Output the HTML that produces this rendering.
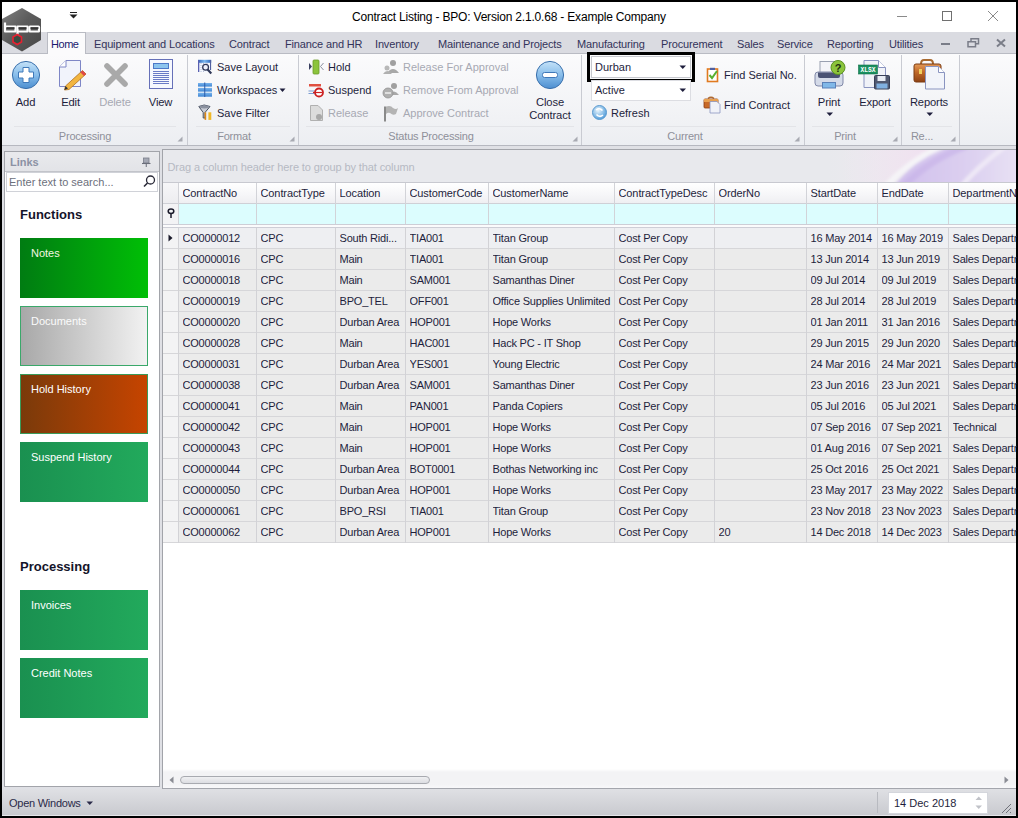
<!DOCTYPE html>
<html><head><meta charset="utf-8">
<style>
*{margin:0;padding:0;box-sizing:border-box}
html,body{width:1018px;height:818px;overflow:hidden;background:#000}
body{position:relative;font-family:"Liberation Sans",sans-serif;font-size:11px;color:#1e1e3c}
.a{position:absolute}
.t{position:absolute;white-space:nowrap;line-height:14px}
svg{position:absolute;overflow:visible}
</style></head><body>

<div class="a" style="left:2px;top:2px;width:1014px;height:814px;background:#fff"></div>
<div class="t" style="left:352px;top:9.6px;font-size:12px;color:#000;font-weight:normal;letter-spacing:-0.19px">Contract Listing - BPO: Version 2.1.0.68 - Example Company</div>
<div class="a" style="left:897px;top:16px;width:10px;height:1px;background:#8a8a8a"></div>
<div class="a" style="left:942px;top:11px;width:10px;height:10px;border:1px solid #707070"></div>
<svg style="left:987px;top:10px" width="12" height="12"><path d="M1 1L11 11M11 1L1 11" stroke="#8a8a8a" stroke-width="1"/></svg>
<div class="a" style="left:70px;top:12px;width:7px;height:1px;background:#222"></div>
<svg style="left:69px;top:14px" width="9" height="6"><path d="M0.5 0.5H8.5L4.5 4.5Z" fill="#222"/></svg>
<div class="a" style="left:2px;top:32px;width:1014px;height:21px;background:#dadbe1"></div>
<div class="a" style="left:2px;top:53px;width:1014px;height:1px;background:#b9bbc3"></div>
<div class="a" style="left:47px;top:32px;width:39px;height:22px;background:#fbfbfc;border:1px solid #b9bbc3;border-bottom:none"></div>
<div class="t" style="left:51px;top:36.5px;font-size:11px;color:#1a1a6e;font-weight:normal;letter-spacing:-0.45px">Home</div>
<div class="t" style="left:94px;top:36.5px;font-size:11px;color:#33335a;font-weight:normal;letter-spacing:-0.15px">Equipment and Locations</div>
<div class="t" style="left:229px;top:36.5px;font-size:11px;color:#33335a;font-weight:normal;letter-spacing:-0.15px">Contract</div>
<div class="t" style="left:285px;top:36.5px;font-size:11px;color:#33335a;font-weight:normal;letter-spacing:-0.15px">Finance and HR</div>
<div class="t" style="left:375px;top:36.5px;font-size:11px;color:#33335a;font-weight:normal;letter-spacing:-0.15px">Inventory</div>
<div class="t" style="left:438px;top:36.5px;font-size:11px;color:#33335a;font-weight:normal;letter-spacing:-0.15px">Maintenance and Projects</div>
<div class="t" style="left:577px;top:36.5px;font-size:11px;color:#33335a;font-weight:normal;letter-spacing:-0.15px">Manufacturing</div>
<div class="t" style="left:661px;top:36.5px;font-size:11px;color:#33335a;font-weight:normal;letter-spacing:-0.15px">Procurement</div>
<div class="t" style="left:737px;top:36.5px;font-size:11px;color:#33335a;font-weight:normal;letter-spacing:-0.15px">Sales</div>
<div class="t" style="left:777px;top:36.5px;font-size:11px;color:#33335a;font-weight:normal;letter-spacing:-0.15px">Service</div>
<div class="t" style="left:827px;top:36.5px;font-size:11px;color:#33335a;font-weight:normal;letter-spacing:-0.15px">Reporting</div>
<div class="t" style="left:889px;top:36.5px;font-size:11px;color:#33335a;font-weight:normal;letter-spacing:-0.15px">Utilities</div>
<div class="a" style="left:941px;top:43px;width:9px;height:2px;background:#7a7d88"></div>
<svg style="left:967px;top:38px" width="13" height="10"><rect x="4" y="0.75" width="7.5" height="5" fill="none" stroke="#7a7d88" stroke-width="1.5"/><rect x="1" y="3.75" width="7.5" height="5" fill="#dadbe1" stroke="#7a7d88" stroke-width="1.5"/></svg>
<svg style="left:996px;top:39px" width="10" height="8"><path d="M1 0.5L9 7.5M9 0.5L1 7.5" stroke="#7a7d88" stroke-width="2"/></svg>
<div class="a" style="left:2px;top:54px;width:1014px;height:91px;background:linear-gradient(#fbfbfc,#f1f2f5 70%,#eceef2)"></div>
<div class="a" style="left:2px;top:145px;width:1014px;height:1px;background:#b6b8c0"></div>
<div class="a" style="left:2px;top:146px;width:1014px;height:4px;background:#dfe0e5"></div>
<div class="a" style="left:187px;top:55px;width:1px;height:90px;background:#c9cbd2"></div>
<div class="a" style="left:298px;top:55px;width:1px;height:90px;background:#c9cbd2"></div>
<div class="a" style="left:581px;top:55px;width:1px;height:90px;background:#c9cbd2"></div>
<div class="a" style="left:804px;top:55px;width:1px;height:90px;background:#c9cbd2"></div>
<div class="a" style="left:901px;top:55px;width:1px;height:90px;background:#c9cbd2"></div>
<div class="a" style="left:959px;top:55px;width:1px;height:90px;background:#c9cbd2"></div>
<div class="a" style="left:14px;top:126px;width:162px;height:1px;background:#e3e4e8"></div>
<div class="a" style="left:196px;top:126px;width:94px;height:1px;background:#e3e4e8"></div>
<div class="a" style="left:306px;top:126px;width:268px;height:1px;background:#e3e4e8"></div>
<div class="a" style="left:590px;top:126px;width:206px;height:1px;background:#e3e4e8"></div>
<div class="a" style="left:812px;top:126px;width:82px;height:1px;background:#e3e4e8"></div>
<div class="a" style="left:910px;top:126px;width:42px;height:1px;background:#e3e4e8"></div>
<div class="t" style="left:25px;width:120px;text-align:center;top:129px;font-size:11px;color:#8e909a;letter-spacing:-0.2px">Processing</div>
<div class="t" style="left:174px;width:120px;text-align:center;top:129px;font-size:11px;color:#8e909a;letter-spacing:-0.2px">Format</div>
<div class="t" style="left:371px;width:120px;text-align:center;top:129px;font-size:11px;color:#8e909a;letter-spacing:-0.2px">Status Processing</div>
<div class="t" style="left:625px;width:120px;text-align:center;top:129px;font-size:11px;color:#8e909a;letter-spacing:-0.2px">Current</div>
<div class="t" style="left:785px;width:120px;text-align:center;top:129px;font-size:11px;color:#8e909a;letter-spacing:-0.2px">Print</div>
<div class="t" style="left:862px;width:120px;text-align:center;top:129px;font-size:11px;color:#8e909a;letter-spacing:-0.2px">Re...</div>
<svg style="left:177px;top:136px" width="6" height="6"><path d="M5.5 0.5V5.5H0.5Z" fill="#a8aab2"/></svg>
<svg style="left:289px;top:136px" width="6" height="6"><path d="M5.5 0.5V5.5H0.5Z" fill="#a8aab2"/></svg>
<svg style="left:572px;top:136px" width="6" height="6"><path d="M5.5 0.5V5.5H0.5Z" fill="#a8aab2"/></svg>
<svg style="left:794px;top:136px" width="6" height="6"><path d="M5.5 0.5V5.5H0.5Z" fill="#a8aab2"/></svg>
<svg style="left:892px;top:136px" width="6" height="6"><path d="M5.5 0.5V5.5H0.5Z" fill="#a8aab2"/></svg>
<svg style="left:950px;top:136px" width="6" height="6"><path d="M5.5 0.5V5.5H0.5Z" fill="#a8aab2"/></svg>
<svg style="left:10px;top:59px" width="32" height="32" viewBox="0 0 32 32">
<defs><linearGradient id="gAdd" x1="0" y1="0" x2="0" y2="1"><stop offset="0" stop-color="#c4e2f8"/><stop offset="0.5" stop-color="#88bdea"/><stop offset="1" stop-color="#4c8ed0"/></linearGradient></defs>
<circle cx="16" cy="16" r="13.6" fill="url(#gAdd)" stroke="#3a70ac" stroke-width="1"/>
<path d="M13 8.5h6v4.5h4.5v6H19v4.5h-6V19H8.5v-6H13Z" fill="#fff" stroke="#3f78b8" stroke-width="1"/>
</svg>
<svg style="left:58px;top:59px" width="30" height="32" viewBox="0 0 30 32">
<path d="M8 1.5H22.5V27.5H1.5V8Z" fill="#f1f3fb" stroke="#7e86c6" stroke-width="1"/>
<path d="M8 1.5V8H1.5" fill="#fff" stroke="#7e86c6" stroke-width="1"/>
<path d="M24.5 11.5L28 15L11 30.5L6.5 31L7.5 27Z" fill="#f2b540" stroke="#b07020" stroke-width="0.8"/>
<path d="M24.5 11.5L28 15L26 17L22.5 13.5Z" fill="#e04848"/>
<path d="M6.5 31L7.5 27L10 29.5Z" fill="#333"/>
</svg>
<svg style="left:102px;top:61px" width="28" height="28" viewBox="0 0 28 28">
<path d="M5 5L23 23M23 5L5 23" stroke="#a9a9a9" stroke-width="5.6" stroke-linecap="round"/>
</svg>
<svg style="left:148px;top:58px" width="26" height="32" viewBox="0 0 26 32">
<rect x="1.5" y="1.5" width="23" height="29" fill="#f6f8fe" stroke="#6670b8" stroke-width="1"/>
<rect x="5.5" y="5.5" width="15" height="5" fill="#8cc4ee" stroke="#4c78c8" stroke-width="1"/>
<path d="M5 13.5h16M5 15.5h16M5 17.5h16M5 19.5h16M5 21.5h16M5 23.5h16M5 25.5h16" stroke="#5a6cc0" stroke-width="0.9"/>
</svg>
<div class="t" style="left:-4.5px;width:60px;text-align:center;top:95px;font-size:11.2px;color:#1e1e3c;letter-spacing:-0.15px">Add</div>
<div class="t" style="left:40.5px;width:60px;text-align:center;top:95px;font-size:11.2px;color:#1e1e3c;letter-spacing:-0.15px">Edit</div>
<div class="t" style="left:85px;width:60px;text-align:center;top:95px;font-size:11.2px;color:#a7a9b3;letter-spacing:-0.15px">Delete</div>
<div class="t" style="left:130.5px;width:60px;text-align:center;top:95px;font-size:11.2px;color:#1e1e3c;letter-spacing:-0.15px">View</div>
<svg style="left:197px;top:59px" width="17" height="17" viewBox="0 0 17 17">
<defs><linearGradient id="gSL" x1="0" y1="0" x2="1" y2="0"><stop offset="0" stop-color="#2c64b8"/><stop offset="0.5" stop-color="#7ab8f0"/><stop offset="1" stop-color="#2c64b8"/></linearGradient></defs>
<rect x="1" y="1" width="13" height="12" fill="#f4f8ff"/>
<rect x="1" y="0.8" width="13.2" height="3" fill="url(#gSL)"/>
<rect x="1" y="1" width="1.3" height="12" fill="#5a60b0"/>
<rect x="13" y="1" width="1.1" height="10" fill="#5060a0"/>
<path d="M4 4v9M6.5 4v9M10 4v3" stroke="#a8b0cc" stroke-width="0.8" stroke-dasharray="1 1"/>
<circle cx="8.6" cy="8.3" r="2.9" fill="#eef2fc" stroke="#303858" stroke-width="1.3"/>
<path d="M10.6 10.6L14.3 14.5" stroke="#303858" stroke-width="2.2"/>
</svg>
<svg style="left:197px;top:82px" width="17" height="16" viewBox="0 0 17 16">
<defs><linearGradient id="gWS" x1="0" y1="0" x2="0" y2="1"><stop offset="0" stop-color="#7ab4ec"/><stop offset="1" stop-color="#3f86d4"/></linearGradient></defs>
<rect x="1" y="1" width="14" height="3.6" fill="url(#gWS)"/><rect x="1" y="5.9" width="14" height="3.7" fill="url(#gWS)"/><rect x="1" y="10.7" width="14" height="4" fill="url(#gWS)"/>
<path d="M7.75 0.5v14.5" stroke="#2a5aa8" stroke-width="1"/>
</svg>
<svg style="left:197px;top:104px" width="17" height="18" viewBox="0 0 17 18">
<path d="M1.8 2.5Q7 -0.5 13 2.5L8 8.5V14H6.2V8.5Z" fill="#c8ccd6" stroke="#4a5262" stroke-width="1"/>
<ellipse cx="7.4" cy="2.8" rx="5" ry="1.6" fill="#8a909e"/>
<rect x="7.6" y="8.3" width="1.6" height="7.6" fill="#e08a18"/>
<rect x="11.4" y="8.3" width="2.9" height="7.6" fill="#f0b828"/>
</svg>
<div class="t" style="left:217px;top:59.7px;font-size:11px;color:#1e1e3c;font-weight:normal;">Save Layout</div>
<div class="t" style="left:217px;top:83.0px;font-size:11px;color:#1e1e3c;font-weight:normal;">Workspaces</div>
<svg style="left:279px;top:88px" width="8" height="5"><path d="M0.5 0.5H6.5L3.5 4Z" fill="#1e1e3c"/></svg>
<div class="t" style="left:217px;top:105.7px;font-size:11px;color:#1e1e3c;font-weight:normal;">Save Filter</div>
<svg style="left:308px;top:59px" width="17" height="16" viewBox="0 0 17 16">
<path d="M1 4L4 7.5L1 11Z" fill="#3a4060"/>
<rect x="5" y="1" width="6" height="14" rx="1" fill="#8cc43c" stroke="#6a9a28" stroke-width="0.8"/>
<path d="M15.5 4L12.5 7.5L15.5 11" fill="none" stroke="#8a90a0" stroke-width="1"/>
</svg>
<svg style="left:308px;top:82px" width="17" height="16" viewBox="0 0 17 16">
<rect x="1" y="2" width="12" height="2.5" fill="#e05040"/>
<path d="M0.5 9h6M0.5 11.5h6" stroke="#7a9ad0" stroke-width="1.2"/>
<circle cx="11" cy="10.5" r="4" fill="#fff" stroke="#cc2020" stroke-width="1.8"/>
<path d="M5 10.5h9" stroke="#cc2020" stroke-width="1.2"/>
</svg>
<svg style="left:309px;top:105px" width="16" height="16" viewBox="0 0 16 16">
<path d="M1.5 0.5H9L13.5 5V15.5H1.5Z" fill="#dcdcdc" stroke="#b0b0b0" stroke-width="1"/>
<circle cx="10" cy="12" r="3" fill="#a8a8a8"/>
</svg>
<div class="t" style="left:328px;top:59.7px;font-size:11px;color:#1e1e3c;font-weight:normal;">Hold</div>
<div class="t" style="left:328px;top:83.0px;font-size:11px;color:#1e1e3c;font-weight:normal;">Suspend</div>
<div class="t" style="left:328px;top:105.7px;font-size:11px;color:#a7a9b3;font-weight:normal;">Release</div>
<svg style="left:383px;top:59px" width="17" height="17" viewBox="0 0 17 17">
<circle cx="10" cy="4" r="3" fill="#a0a0a0"/><path d="M4 14Q10 6 16 14Z" fill="#a8a8a8"/>
<circle cx="4" cy="9" r="2.5" fill="#b8b8b8"/><path d="M0 15Q4 9 9 15Z" fill="#b0b0b0"/>
</svg>
<svg style="left:382px;top:82px" width="18" height="18" viewBox="0 0 18 18">
<circle cx="12" cy="4" r="3" fill="#a0a0a0"/><path d="M7 13Q12 6 17 13Z" fill="#a8a8a8"/>
<circle cx="6" cy="11" r="5" fill="#b0b0b0" stroke="#909090" stroke-width="0.8"/><path d="M3 11h6" stroke="#fff" stroke-width="1.2"/>
</svg>
<svg style="left:383px;top:105px" width="17" height="17" viewBox="0 0 17 17">
<path d="M2 1.5V16.5" stroke="#8a8a8a" stroke-width="2"/>
<path d="M3 1.5Q8 0 10 3Q13 5 15 3L13 9Q10 11 7 8Q5 7 3 9Z" fill="#b4b4b4"/>
</svg>
<div class="t" style="left:403px;top:59.7px;font-size:11px;color:#a7a9b3;font-weight:normal;">Release For Approval</div>
<div class="t" style="left:403px;top:83.0px;font-size:11px;color:#a7a9b3;font-weight:normal;">Remove From Approval</div>
<div class="t" style="left:403px;top:105.7px;font-size:11px;color:#a7a9b3;font-weight:normal;">Approve Contract</div>
<svg style="left:534px;top:59px" width="32" height="32" viewBox="0 0 32 32">
<defs><linearGradient id="gCl" x1="0" y1="0" x2="0" y2="1"><stop offset="0" stop-color="#c4e2f8"/><stop offset="0.5" stop-color="#88bdea"/><stop offset="1" stop-color="#4c8ed0"/></linearGradient></defs>
<circle cx="16" cy="16" r="13.6" fill="url(#gCl)" stroke="#3a70ac" stroke-width="1"/>
<rect x="8.5" y="13.5" width="15" height="5" rx="2" fill="#fff" stroke="#3f78b8" stroke-width="1"/>
</svg>
<div class="t" style="left:510px;width:80px;text-align:center;top:96px;font-size:11.2px;letter-spacing:-0.1px;color:#1e1e3c;line-height:12.5px">Close<br>Contract</div>
<div class="a" style="left:587px;top:52px;width:108px;height:30px;border:3px solid #000"></div>
<div class="a" style="left:591px;top:56px;width:100px;height:22px;background:#fff;border:1px solid #c6c8ce"></div>
<div class="t" style="left:595px;top:59.8px;font-size:11px;color:#1e1e3c;font-weight:normal;">Durban</div>
<svg style="left:679px;top:65px" width="8" height="5"><path d="M0.5 0.5H7L3.75 4Z" fill="#1e1e3c"/></svg>
<div class="a" style="left:591px;top:80px;width:100px;height:21px;background:#fff;border:1px solid #dcdde2"></div>
<div class="t" style="left:595px;top:83.0px;font-size:11px;color:#1e1e3c;font-weight:normal;">Active</div>
<svg style="left:679px;top:88px" width="8" height="5"><path d="M0.5 0.5H7L3.75 4Z" fill="#1e1e3c"/></svg>
<svg style="left:591px;top:104px" width="17" height="17" viewBox="0 0 17 17">
<defs><radialGradient id="gRf" cx="0.4" cy="0.35" r="0.7"><stop offset="0" stop-color="#e8f4fc"/><stop offset="1" stop-color="#4a98d8"/></radialGradient></defs>
<circle cx="8.5" cy="8.5" r="7" fill="url(#gRf)" stroke="#5a9ad0" stroke-width="1"/>
<path d="M5 6Q8.5 3 11.5 6.5M12 11Q8.5 14 5.5 10.5" fill="none" stroke="#fff" stroke-width="1.5"/>
</svg>
<div class="t" style="left:611px;top:105.7px;font-size:11px;color:#1e1e3c;font-weight:normal;">Refresh</div>
<svg style="left:706px;top:67px" width="14" height="16" viewBox="0 0 14 16">
<rect x="1.5" y="2" width="10" height="12.5" fill="#fff" stroke="#e07a20" stroke-width="1.6"/>
<rect x="4" y="0.8" width="5" height="2.2" fill="#5060a0"/>
<path d="M3.5 8L6 11L11 4" fill="none" stroke="#58b030" stroke-width="2"/>
</svg>
<div class="t" style="left:724px;top:68.0px;font-size:11px;color:#1e1e3c;font-weight:normal;">Find Serial No.</div>
<svg style="left:703px;top:96px" width="19" height="18" viewBox="0 0 19 18">
<path d="M5 2.5Q8 0 11 2.5" fill="none" stroke="#b06a30" stroke-width="1.5"/>
<rect x="1" y="3" width="14" height="9" rx="1" fill="#c86a28" stroke="#8a3a10" stroke-width="0.8"/>
<rect x="1" y="3" width="14" height="3" fill="#e8a050"/>
<path d="M7 5.5H14L17 8.5V17H7Z" fill="#f0f2f8" stroke="#8a94c0" stroke-width="0.8"/>
</svg>
<div class="t" style="left:724px;top:98.0px;font-size:11px;color:#1e1e3c;font-weight:normal;">Find Contract</div>
<svg style="left:813px;top:58px" width="34" height="32" viewBox="0 0 34 32">
<rect x="7" y="3.5" width="14" height="11" fill="#f4f4f8" stroke="#9aa0b0" stroke-width="1"/>
<rect x="2" y="14" width="28" height="14" rx="3" fill="#d4dae8" stroke="#8088a8" stroke-width="1"/>
<path d="M5 14.5H27V18Q27 20 25 20H7Q5 20 5 18Z" fill="#4a5274"/>
<rect x="9.5" y="24.5" width="13" height="5.5" fill="#80b8e8" stroke="#5a80b8" stroke-width="1"/>
<circle cx="25" cy="9.5" r="7" fill="#8cc43c" stroke="#5a9020" stroke-width="1"/>
<text x="25" y="13.5" font-family="Liberation Sans" font-weight="bold" font-size="11" text-anchor="middle" fill="#203010">?</text>
</svg>
<svg style="left:857px;top:59px" width="34" height="32" viewBox="0 0 34 32">
<path d="M7 1.5H21.5L28.5 8.5V28.5H7Z" fill="#f0f2f8" stroke="#8a94c0" stroke-width="1"/>
<path d="M21.5 1.5V8.5H28.5" fill="#fff" stroke="#8a94c0" stroke-width="1"/>
<rect x="1.5" y="6" width="19" height="9" fill="#1a9060" stroke="#107048" stroke-width="0.6"/>
<text x="11" y="13.2" font-family="Liberation Mono" font-weight="bold" font-size="7" text-anchor="middle" fill="#fff" textLength="15" lengthAdjust="spacingAndGlyphs">XLSX</text>
<rect x="17.5" y="16.5" width="15" height="13.5" rx="1" fill="#505870" stroke="#384058" stroke-width="1"/>
<rect x="20.5" y="17" width="8" height="5" fill="#e8ecf4"/>
<rect x="19.5" y="24.5" width="11" height="5" fill="#80b0e0"/>
</svg>
<svg style="left:912px;top:58px" width="34" height="32" viewBox="0 0 34 32">
<path d="M9 6Q9 2 12 2H18Q21 2 21 6" fill="none" stroke="#a86a30" stroke-width="2"/>
<defs><linearGradient id="gBc" x1="0" y1="0" x2="0" y2="1"><stop offset="0" stop-color="#e49a58"/><stop offset="0.45" stop-color="#c06828"/><stop offset="1" stop-color="#8e4214"/></linearGradient></defs>
<rect x="2" y="6" width="27" height="18" rx="2" fill="url(#gBc)" stroke="#7a3a12" stroke-width="1"/>
<rect x="7" y="11" width="3" height="5" fill="#f0d060"/>
<path d="M13.5 8.5H26.5L32.5 14.5V31H13.5Z" fill="#f2f4fa" stroke="#8a94c0" stroke-width="1"/>
<path d="M26.5 8.5V14.5H32.5" fill="#fff" stroke="#8a94c0" stroke-width="1"/>
</svg>
<div class="t" style="left:799px;width:60px;text-align:center;top:95px;font-size:11.2px;color:#1e1e3c;letter-spacing:-0.15px">Print</div>
<div class="t" style="left:845px;width:60px;text-align:center;top:95px;font-size:11.2px;color:#1e1e3c;letter-spacing:-0.15px">Export</div>
<div class="t" style="left:899px;width:60px;text-align:center;top:95px;font-size:11.2px;color:#1e1e3c;letter-spacing:-0.15px">Reports</div>
<svg style="left:826px;top:111.5px" width="8" height="5"><path d="M0.5 0.5H7L3.75 4Z" fill="#1e1e3c"/></svg>
<svg style="left:926px;top:111.5px" width="8" height="5"><path d="M0.5 0.5H7L3.75 4Z" fill="#1e1e3c"/></svg>
<div class="a" style="left:2px;top:146px;width:1014px;height:643px;background:#dfe0e5"></div>
<div class="a" style="left:4px;top:151px;width:156px;height:636px;background:#fff;border:1px solid #a2a4aa"></div>
<div class="a" style="left:5px;top:152px;width:154px;height:20px;background:linear-gradient(#e9eaed,#e2e3e7)"></div>
<div class="a" style="left:5px;top:171px;width:154px;height:1px;background:#c2c4ca"></div>
<div class="t" style="left:10px;top:155.0px;font-size:11px;color:#8c92a4;font-weight:bold;">Links</div>
<svg style="left:141px;top:155px" width="11" height="13" viewBox="0 0 11 13">
<rect x="2.5" y="3" width="5.5" height="5" fill="#a4a8b4" stroke="#7a7e8a" stroke-width="0.8"/><path d="M1 8.5h8.5" stroke="#6a6e7a" stroke-width="1.1"/><path d="M5.25 9v3" stroke="#6a6e7a" stroke-width="1"/>
</svg>
<div class="a" style="left:6px;top:172px;width:152px;height:20px;background:#fff;border:1px solid #d0d2d8"></div>
<div class="t" style="left:9px;top:175.0px;font-size:11px;color:#6c707c;font-weight:normal;">Enter text to search...</div>
<svg style="left:142px;top:174px" width="15" height="15" viewBox="0 0 15 15">
<circle cx="8.5" cy="6" r="4" fill="none" stroke="#2a2a38" stroke-width="1.3"/><path d="M5.5 9L2 12.5" stroke="#2a2a38" stroke-width="1.6"/>
</svg>
<div class="t" style="left:20px;top:207.5px;font-size:13px;color:#14142a;font-weight:bold;">Functions</div>
<div class="t" style="left:20px;top:559.5px;font-size:13px;color:#14142a;font-weight:bold;">Processing</div>
<div class="a" style="left:20px;top:238px;width:128px;height:60px;background:linear-gradient(90deg,#007c12,#00bf06);border:none"></div>
<div class="t" style="left:31px;top:246.0px;font-size:11px;color:#f4f6e0;font-weight:normal;">Notes</div>
<div class="a" style="left:20px;top:306px;width:128px;height:60px;background:linear-gradient(90deg,#a8a8a8,#f2f2f2);border:1px solid #3aa86a"></div>
<div class="t" style="left:31px;top:314.0px;font-size:11px;color:#fbfbfb;font-weight:normal;">Documents</div>
<div class="a" style="left:20px;top:374px;width:128px;height:60px;background:linear-gradient(90deg,#7a3a0a,#c64400);border:1px solid #3a9a5a"></div>
<div class="t" style="left:31px;top:382.0px;font-size:11px;color:#fff;font-weight:normal;">Hold History</div>
<div class="a" style="left:20px;top:442px;width:128px;height:60px;background:linear-gradient(90deg,#1a9050,#22aa5c);border:none"></div>
<div class="t" style="left:31px;top:450.0px;font-size:11px;color:#fff;font-weight:normal;">Suspend History</div>
<div class="a" style="left:20px;top:590px;width:128px;height:60px;background:linear-gradient(90deg,#1a9050,#22aa5c);border:none"></div>
<div class="t" style="left:31px;top:598.0px;font-size:11px;color:#fff;font-weight:normal;">Invoices</div>
<div class="a" style="left:20px;top:658px;width:128px;height:60px;background:linear-gradient(90deg,#1a9050,#22aa5c);border:none"></div>
<div class="t" style="left:31px;top:666.0px;font-size:11px;color:#fff;font-weight:normal;">Credit Notes</div>
<div class="a" style="left:162px;top:149px;width:854px;height:640px;background:#fff;border-left:1px solid #a2a4aa;border-top:1px solid #a2a4aa"></div>
<div class="a" style="left:163px;top:150px;width:853px;height:32px;background:linear-gradient(90deg,#e8e9ed,#e8e9ed 78%,#eee9f0 88%,#e8e0f2)"></div>
<svg style="left:840px;top:150px;overflow:hidden" width="176" height="32" viewBox="840 150 176 32">
<defs>
<linearGradient id="gSw" x1="0" y1="0" x2="1" y2="0"><stop offset="0" stop-color="#d0bfec"/><stop offset="0.6" stop-color="#dcd0f0"/><stop offset="1" stop-color="#e8e2f4"/></linearGradient>
<linearGradient id="gPk" x1="0" y1="0" x2="1" y2="0"><stop offset="0" stop-color="#efe6f0" stop-opacity="0"/><stop offset="1" stop-color="#f0e0f0"/></linearGradient>
</defs>
<path d="M840 150H930L890 182H840Z" fill="url(#gPk)"/>
<filter id="fBl"><feGaussianBlur stdDeviation="1.4"/></filter>
<g filter="url(#fBl)">
<path d="M894 186Q915 160 944 146H1020V186Z" fill="url(#gSw)"/>
<path d="M884 188Q910 160 942 146" stroke="#f6f4f8" stroke-width="6" fill="none" opacity="0.95"/>
<path d="M902 188Q928 160 966 146" stroke="#c6b0e8" stroke-width="7" fill="none" opacity="0.6"/>
<path d="M960 188Q978 166 1006 146" stroke="#efeaf6" stroke-width="5" fill="none" opacity="0.9"/>
</g>
</svg>
<div class="t" style="left:167.5px;top:160.0px;font-size:11px;color:#b6b9c3;font-weight:normal;letter-spacing:-0.1px">Drag a column header here to group by that column</div>
<div class="a" style="left:163px;top:182px;width:853px;height:1px;background:#c8c9d0"></div>
<div class="a" style="left:163px;top:183px;width:853px;height:20px;background:linear-gradient(#ffffff,#f6f6f8 60%,#efeff2)"></div>
<div class="a" style="left:163px;top:183px;width:15px;height:20px;background:linear-gradient(#f6f6f8,#ededf0)"></div>
<div class="a" style="left:163px;top:203px;width:853px;height:1px;background:#cfd0d6"></div>
<div class="a" style="left:163px;top:204px;width:853px;height:20px;background:#dcfdfe"></div>
<div class="a" style="left:163px;top:204px;width:15px;height:20px;background:#f3f3f5"></div>
<svg style="left:167px;top:208px" width="8" height="11" viewBox="0 0 8 11"><ellipse cx="4" cy="3.2" rx="2.8" ry="2.2" fill="none" stroke="#1a1a2a" stroke-width="1.5"/><path d="M4 5V10" stroke="#1a1a2a" stroke-width="1.5"/></svg>
<div class="a" style="left:163px;top:224px;width:853px;height:1px;background:#cdced6"></div>
<div class="a" style="left:163px;top:225px;width:853px;height:2px;background:#fbfbfc"></div>
<div class="a" style="left:163px;top:227px;width:853px;height:1px;background:#cdced6"></div>
<div class="t" style="left:182.5px;top:186px;width:74px;overflow:hidden;font-size:11px;color:#1e1e3c;letter-spacing:-0.1px">ContractNo</div>
<div class="t" style="left:260.5px;top:186px;width:75px;overflow:hidden;font-size:11px;color:#1e1e3c;letter-spacing:-0.1px">ContractType</div>
<div class="t" style="left:339.5px;top:186px;width:66px;overflow:hidden;font-size:11px;color:#1e1e3c;letter-spacing:-0.1px">Location</div>
<div class="t" style="left:409.5px;top:186px;width:79px;overflow:hidden;font-size:11px;color:#1e1e3c;letter-spacing:-0.1px">CustomerCode</div>
<div class="t" style="left:492.5px;top:186px;width:122px;overflow:hidden;font-size:11px;color:#1e1e3c;letter-spacing:-0.1px">CustomerName</div>
<div class="t" style="left:618.5px;top:186px;width:96px;overflow:hidden;font-size:11px;color:#1e1e3c;letter-spacing:-0.1px">ContractTypeDesc</div>
<div class="t" style="left:718.5px;top:186px;width:88px;overflow:hidden;font-size:11px;color:#1e1e3c;letter-spacing:-0.1px">OrderNo</div>
<div class="t" style="left:810.5px;top:186px;width:67px;overflow:hidden;font-size:11px;color:#1e1e3c;letter-spacing:-0.1px">StartDate</div>
<div class="t" style="left:881.5px;top:186px;width:67px;overflow:hidden;font-size:11px;color:#1e1e3c;letter-spacing:-0.1px">EndDate</div>
<div class="t" style="left:952.5px;top:186px;width:64px;overflow:hidden;font-size:11px;color:#1e1e3c;letter-spacing:-0.1px">DepartmentName</div>
<div class="a" style="left:163px;top:228px;width:853px;height:20px;background:#eeeff2"></div>
<div class="a" style="left:163px;top:248px;width:853px;height:1px;background:#d6d6d9"></div>
<div class="a" style="left:163px;top:228px;width:15px;height:20px;background:#f3f3f4"></div>
<div class="t" style="left:182.5px;top:231px;width:74px;overflow:hidden;font-size:11px;color:#1e1e3c;letter-spacing:-0.2px">CO0000012</div>
<div class="t" style="left:260.5px;top:231px;width:75px;overflow:hidden;font-size:11px;color:#1e1e3c;letter-spacing:-0.2px">CPC</div>
<div class="t" style="left:339.5px;top:231px;width:66px;overflow:hidden;font-size:11px;color:#1e1e3c;letter-spacing:-0.2px">South Ridi...</div>
<div class="t" style="left:409.5px;top:231px;width:79px;overflow:hidden;font-size:11px;color:#1e1e3c;letter-spacing:-0.2px">TIA001</div>
<div class="t" style="left:492.5px;top:231px;width:122px;overflow:hidden;font-size:11px;color:#1e1e3c;letter-spacing:-0.2px">Titan Group</div>
<div class="t" style="left:618.5px;top:231px;width:96px;overflow:hidden;font-size:11px;color:#1e1e3c;letter-spacing:-0.2px">Cost Per Copy</div>
<div class="t" style="left:810.5px;top:231px;width:67px;overflow:hidden;font-size:11px;color:#1e1e3c;letter-spacing:-0.2px">16 May 2014</div>
<div class="t" style="left:881.5px;top:231px;width:67px;overflow:hidden;font-size:11px;color:#1e1e3c;letter-spacing:-0.2px">16 May 2019</div>
<div class="t" style="left:952.5px;top:231px;width:64px;overflow:hidden;font-size:11px;color:#1e1e3c;letter-spacing:-0.2px">Sales Department</div>
<div class="a" style="left:163px;top:249px;width:853px;height:20px;background:#ebebeb"></div>
<div class="a" style="left:163px;top:269px;width:853px;height:1px;background:#d6d6d9"></div>
<div class="a" style="left:163px;top:249px;width:15px;height:20px;background:#f3f3f4"></div>
<div class="t" style="left:182.5px;top:252px;width:74px;overflow:hidden;font-size:11px;color:#1e1e3c;letter-spacing:-0.2px">CO0000016</div>
<div class="t" style="left:260.5px;top:252px;width:75px;overflow:hidden;font-size:11px;color:#1e1e3c;letter-spacing:-0.2px">CPC</div>
<div class="t" style="left:339.5px;top:252px;width:66px;overflow:hidden;font-size:11px;color:#1e1e3c;letter-spacing:-0.2px">Main</div>
<div class="t" style="left:409.5px;top:252px;width:79px;overflow:hidden;font-size:11px;color:#1e1e3c;letter-spacing:-0.2px">TIA001</div>
<div class="t" style="left:492.5px;top:252px;width:122px;overflow:hidden;font-size:11px;color:#1e1e3c;letter-spacing:-0.2px">Titan Group</div>
<div class="t" style="left:618.5px;top:252px;width:96px;overflow:hidden;font-size:11px;color:#1e1e3c;letter-spacing:-0.2px">Cost Per Copy</div>
<div class="t" style="left:810.5px;top:252px;width:67px;overflow:hidden;font-size:11px;color:#1e1e3c;letter-spacing:-0.2px">13 Jun 2014</div>
<div class="t" style="left:881.5px;top:252px;width:67px;overflow:hidden;font-size:11px;color:#1e1e3c;letter-spacing:-0.2px">13 Jun 2019</div>
<div class="t" style="left:952.5px;top:252px;width:64px;overflow:hidden;font-size:11px;color:#1e1e3c;letter-spacing:-0.2px">Sales Department</div>
<div class="a" style="left:163px;top:270px;width:853px;height:20px;background:#ebebeb"></div>
<div class="a" style="left:163px;top:290px;width:853px;height:1px;background:#d6d6d9"></div>
<div class="a" style="left:163px;top:270px;width:15px;height:20px;background:#f3f3f4"></div>
<div class="t" style="left:182.5px;top:273px;width:74px;overflow:hidden;font-size:11px;color:#1e1e3c;letter-spacing:-0.2px">CO0000018</div>
<div class="t" style="left:260.5px;top:273px;width:75px;overflow:hidden;font-size:11px;color:#1e1e3c;letter-spacing:-0.2px">CPC</div>
<div class="t" style="left:339.5px;top:273px;width:66px;overflow:hidden;font-size:11px;color:#1e1e3c;letter-spacing:-0.2px">Main</div>
<div class="t" style="left:409.5px;top:273px;width:79px;overflow:hidden;font-size:11px;color:#1e1e3c;letter-spacing:-0.2px">SAM001</div>
<div class="t" style="left:492.5px;top:273px;width:122px;overflow:hidden;font-size:11px;color:#1e1e3c;letter-spacing:-0.2px">Samanthas Diner</div>
<div class="t" style="left:618.5px;top:273px;width:96px;overflow:hidden;font-size:11px;color:#1e1e3c;letter-spacing:-0.2px">Cost Per Copy</div>
<div class="t" style="left:810.5px;top:273px;width:67px;overflow:hidden;font-size:11px;color:#1e1e3c;letter-spacing:-0.2px">09 Jul 2014</div>
<div class="t" style="left:881.5px;top:273px;width:67px;overflow:hidden;font-size:11px;color:#1e1e3c;letter-spacing:-0.2px">09 Jul 2019</div>
<div class="t" style="left:952.5px;top:273px;width:64px;overflow:hidden;font-size:11px;color:#1e1e3c;letter-spacing:-0.2px">Sales Department</div>
<div class="a" style="left:163px;top:291px;width:853px;height:20px;background:#ebebeb"></div>
<div class="a" style="left:163px;top:311px;width:853px;height:1px;background:#d6d6d9"></div>
<div class="a" style="left:163px;top:291px;width:15px;height:20px;background:#f3f3f4"></div>
<div class="t" style="left:182.5px;top:294px;width:74px;overflow:hidden;font-size:11px;color:#1e1e3c;letter-spacing:-0.2px">CO0000019</div>
<div class="t" style="left:260.5px;top:294px;width:75px;overflow:hidden;font-size:11px;color:#1e1e3c;letter-spacing:-0.2px">CPC</div>
<div class="t" style="left:339.5px;top:294px;width:66px;overflow:hidden;font-size:11px;color:#1e1e3c;letter-spacing:-0.2px">BPO_TEL</div>
<div class="t" style="left:409.5px;top:294px;width:79px;overflow:hidden;font-size:11px;color:#1e1e3c;letter-spacing:-0.2px">OFF001</div>
<div class="t" style="left:492.5px;top:294px;width:122px;overflow:hidden;font-size:11px;color:#1e1e3c;letter-spacing:-0.2px">Office Supplies Unlimited</div>
<div class="t" style="left:618.5px;top:294px;width:96px;overflow:hidden;font-size:11px;color:#1e1e3c;letter-spacing:-0.2px">Cost Per Copy</div>
<div class="t" style="left:810.5px;top:294px;width:67px;overflow:hidden;font-size:11px;color:#1e1e3c;letter-spacing:-0.2px">28 Jul 2014</div>
<div class="t" style="left:881.5px;top:294px;width:67px;overflow:hidden;font-size:11px;color:#1e1e3c;letter-spacing:-0.2px">28 Jul 2019</div>
<div class="t" style="left:952.5px;top:294px;width:64px;overflow:hidden;font-size:11px;color:#1e1e3c;letter-spacing:-0.2px">Sales Department</div>
<div class="a" style="left:163px;top:312px;width:853px;height:20px;background:#ebebeb"></div>
<div class="a" style="left:163px;top:332px;width:853px;height:1px;background:#d6d6d9"></div>
<div class="a" style="left:163px;top:312px;width:15px;height:20px;background:#f3f3f4"></div>
<div class="t" style="left:182.5px;top:315px;width:74px;overflow:hidden;font-size:11px;color:#1e1e3c;letter-spacing:-0.2px">CO0000020</div>
<div class="t" style="left:260.5px;top:315px;width:75px;overflow:hidden;font-size:11px;color:#1e1e3c;letter-spacing:-0.2px">CPC</div>
<div class="t" style="left:339.5px;top:315px;width:66px;overflow:hidden;font-size:11px;color:#1e1e3c;letter-spacing:-0.2px">Durban Area</div>
<div class="t" style="left:409.5px;top:315px;width:79px;overflow:hidden;font-size:11px;color:#1e1e3c;letter-spacing:-0.2px">HOP001</div>
<div class="t" style="left:492.5px;top:315px;width:122px;overflow:hidden;font-size:11px;color:#1e1e3c;letter-spacing:-0.2px">Hope Works</div>
<div class="t" style="left:618.5px;top:315px;width:96px;overflow:hidden;font-size:11px;color:#1e1e3c;letter-spacing:-0.2px">Cost Per Copy</div>
<div class="t" style="left:810.5px;top:315px;width:67px;overflow:hidden;font-size:11px;color:#1e1e3c;letter-spacing:-0.2px">01 Jan 2011</div>
<div class="t" style="left:881.5px;top:315px;width:67px;overflow:hidden;font-size:11px;color:#1e1e3c;letter-spacing:-0.2px">31 Jan 2016</div>
<div class="t" style="left:952.5px;top:315px;width:64px;overflow:hidden;font-size:11px;color:#1e1e3c;letter-spacing:-0.2px">Sales Department</div>
<div class="a" style="left:163px;top:333px;width:853px;height:20px;background:#ebebeb"></div>
<div class="a" style="left:163px;top:353px;width:853px;height:1px;background:#d6d6d9"></div>
<div class="a" style="left:163px;top:333px;width:15px;height:20px;background:#f3f3f4"></div>
<div class="t" style="left:182.5px;top:336px;width:74px;overflow:hidden;font-size:11px;color:#1e1e3c;letter-spacing:-0.2px">CO0000028</div>
<div class="t" style="left:260.5px;top:336px;width:75px;overflow:hidden;font-size:11px;color:#1e1e3c;letter-spacing:-0.2px">CPC</div>
<div class="t" style="left:339.5px;top:336px;width:66px;overflow:hidden;font-size:11px;color:#1e1e3c;letter-spacing:-0.2px">Main</div>
<div class="t" style="left:409.5px;top:336px;width:79px;overflow:hidden;font-size:11px;color:#1e1e3c;letter-spacing:-0.2px">HAC001</div>
<div class="t" style="left:492.5px;top:336px;width:122px;overflow:hidden;font-size:11px;color:#1e1e3c;letter-spacing:-0.2px">Hack PC - IT Shop</div>
<div class="t" style="left:618.5px;top:336px;width:96px;overflow:hidden;font-size:11px;color:#1e1e3c;letter-spacing:-0.2px">Cost Per Copy</div>
<div class="t" style="left:810.5px;top:336px;width:67px;overflow:hidden;font-size:11px;color:#1e1e3c;letter-spacing:-0.2px">29 Jun 2015</div>
<div class="t" style="left:881.5px;top:336px;width:67px;overflow:hidden;font-size:11px;color:#1e1e3c;letter-spacing:-0.2px">29 Jun 2020</div>
<div class="t" style="left:952.5px;top:336px;width:64px;overflow:hidden;font-size:11px;color:#1e1e3c;letter-spacing:-0.2px">Sales Department</div>
<div class="a" style="left:163px;top:354px;width:853px;height:20px;background:#ebebeb"></div>
<div class="a" style="left:163px;top:374px;width:853px;height:1px;background:#d6d6d9"></div>
<div class="a" style="left:163px;top:354px;width:15px;height:20px;background:#f3f3f4"></div>
<div class="t" style="left:182.5px;top:357px;width:74px;overflow:hidden;font-size:11px;color:#1e1e3c;letter-spacing:-0.2px">CO0000031</div>
<div class="t" style="left:260.5px;top:357px;width:75px;overflow:hidden;font-size:11px;color:#1e1e3c;letter-spacing:-0.2px">CPC</div>
<div class="t" style="left:339.5px;top:357px;width:66px;overflow:hidden;font-size:11px;color:#1e1e3c;letter-spacing:-0.2px">Durban Area</div>
<div class="t" style="left:409.5px;top:357px;width:79px;overflow:hidden;font-size:11px;color:#1e1e3c;letter-spacing:-0.2px">YES001</div>
<div class="t" style="left:492.5px;top:357px;width:122px;overflow:hidden;font-size:11px;color:#1e1e3c;letter-spacing:-0.2px">Young Electric</div>
<div class="t" style="left:618.5px;top:357px;width:96px;overflow:hidden;font-size:11px;color:#1e1e3c;letter-spacing:-0.2px">Cost Per Copy</div>
<div class="t" style="left:810.5px;top:357px;width:67px;overflow:hidden;font-size:11px;color:#1e1e3c;letter-spacing:-0.2px">24 Mar 2016</div>
<div class="t" style="left:881.5px;top:357px;width:67px;overflow:hidden;font-size:11px;color:#1e1e3c;letter-spacing:-0.2px">24 Mar 2021</div>
<div class="t" style="left:952.5px;top:357px;width:64px;overflow:hidden;font-size:11px;color:#1e1e3c;letter-spacing:-0.2px">Sales Department</div>
<div class="a" style="left:163px;top:375px;width:853px;height:20px;background:#ebebeb"></div>
<div class="a" style="left:163px;top:395px;width:853px;height:1px;background:#d6d6d9"></div>
<div class="a" style="left:163px;top:375px;width:15px;height:20px;background:#f3f3f4"></div>
<div class="t" style="left:182.5px;top:378px;width:74px;overflow:hidden;font-size:11px;color:#1e1e3c;letter-spacing:-0.2px">CO0000038</div>
<div class="t" style="left:260.5px;top:378px;width:75px;overflow:hidden;font-size:11px;color:#1e1e3c;letter-spacing:-0.2px">CPC</div>
<div class="t" style="left:339.5px;top:378px;width:66px;overflow:hidden;font-size:11px;color:#1e1e3c;letter-spacing:-0.2px">Durban Area</div>
<div class="t" style="left:409.5px;top:378px;width:79px;overflow:hidden;font-size:11px;color:#1e1e3c;letter-spacing:-0.2px">SAM001</div>
<div class="t" style="left:492.5px;top:378px;width:122px;overflow:hidden;font-size:11px;color:#1e1e3c;letter-spacing:-0.2px">Samanthas Diner</div>
<div class="t" style="left:618.5px;top:378px;width:96px;overflow:hidden;font-size:11px;color:#1e1e3c;letter-spacing:-0.2px">Cost Per Copy</div>
<div class="t" style="left:810.5px;top:378px;width:67px;overflow:hidden;font-size:11px;color:#1e1e3c;letter-spacing:-0.2px">23 Jun 2016</div>
<div class="t" style="left:881.5px;top:378px;width:67px;overflow:hidden;font-size:11px;color:#1e1e3c;letter-spacing:-0.2px">23 Jun 2021</div>
<div class="t" style="left:952.5px;top:378px;width:64px;overflow:hidden;font-size:11px;color:#1e1e3c;letter-spacing:-0.2px">Sales Department</div>
<div class="a" style="left:163px;top:396px;width:853px;height:20px;background:#ebebeb"></div>
<div class="a" style="left:163px;top:416px;width:853px;height:1px;background:#d6d6d9"></div>
<div class="a" style="left:163px;top:396px;width:15px;height:20px;background:#f3f3f4"></div>
<div class="t" style="left:182.5px;top:399px;width:74px;overflow:hidden;font-size:11px;color:#1e1e3c;letter-spacing:-0.2px">CO0000041</div>
<div class="t" style="left:260.5px;top:399px;width:75px;overflow:hidden;font-size:11px;color:#1e1e3c;letter-spacing:-0.2px">CPC</div>
<div class="t" style="left:339.5px;top:399px;width:66px;overflow:hidden;font-size:11px;color:#1e1e3c;letter-spacing:-0.2px">Main</div>
<div class="t" style="left:409.5px;top:399px;width:79px;overflow:hidden;font-size:11px;color:#1e1e3c;letter-spacing:-0.2px">PAN001</div>
<div class="t" style="left:492.5px;top:399px;width:122px;overflow:hidden;font-size:11px;color:#1e1e3c;letter-spacing:-0.2px">Panda Copiers</div>
<div class="t" style="left:618.5px;top:399px;width:96px;overflow:hidden;font-size:11px;color:#1e1e3c;letter-spacing:-0.2px">Cost Per Copy</div>
<div class="t" style="left:810.5px;top:399px;width:67px;overflow:hidden;font-size:11px;color:#1e1e3c;letter-spacing:-0.2px">05 Jul 2016</div>
<div class="t" style="left:881.5px;top:399px;width:67px;overflow:hidden;font-size:11px;color:#1e1e3c;letter-spacing:-0.2px">05 Jul 2021</div>
<div class="t" style="left:952.5px;top:399px;width:64px;overflow:hidden;font-size:11px;color:#1e1e3c;letter-spacing:-0.2px">Sales Department</div>
<div class="a" style="left:163px;top:417px;width:853px;height:20px;background:#ebebeb"></div>
<div class="a" style="left:163px;top:437px;width:853px;height:1px;background:#d6d6d9"></div>
<div class="a" style="left:163px;top:417px;width:15px;height:20px;background:#f3f3f4"></div>
<div class="t" style="left:182.5px;top:420px;width:74px;overflow:hidden;font-size:11px;color:#1e1e3c;letter-spacing:-0.2px">CO0000042</div>
<div class="t" style="left:260.5px;top:420px;width:75px;overflow:hidden;font-size:11px;color:#1e1e3c;letter-spacing:-0.2px">CPC</div>
<div class="t" style="left:339.5px;top:420px;width:66px;overflow:hidden;font-size:11px;color:#1e1e3c;letter-spacing:-0.2px">Main</div>
<div class="t" style="left:409.5px;top:420px;width:79px;overflow:hidden;font-size:11px;color:#1e1e3c;letter-spacing:-0.2px">HOP001</div>
<div class="t" style="left:492.5px;top:420px;width:122px;overflow:hidden;font-size:11px;color:#1e1e3c;letter-spacing:-0.2px">Hope Works</div>
<div class="t" style="left:618.5px;top:420px;width:96px;overflow:hidden;font-size:11px;color:#1e1e3c;letter-spacing:-0.2px">Cost Per Copy</div>
<div class="t" style="left:810.5px;top:420px;width:67px;overflow:hidden;font-size:11px;color:#1e1e3c;letter-spacing:-0.2px">07 Sep 2016</div>
<div class="t" style="left:881.5px;top:420px;width:67px;overflow:hidden;font-size:11px;color:#1e1e3c;letter-spacing:-0.2px">07 Sep 2021</div>
<div class="t" style="left:952.5px;top:420px;width:64px;overflow:hidden;font-size:11px;color:#1e1e3c;letter-spacing:-0.2px">Technical</div>
<div class="a" style="left:163px;top:438px;width:853px;height:20px;background:#ebebeb"></div>
<div class="a" style="left:163px;top:458px;width:853px;height:1px;background:#d6d6d9"></div>
<div class="a" style="left:163px;top:438px;width:15px;height:20px;background:#f3f3f4"></div>
<div class="t" style="left:182.5px;top:441px;width:74px;overflow:hidden;font-size:11px;color:#1e1e3c;letter-spacing:-0.2px">CO0000043</div>
<div class="t" style="left:260.5px;top:441px;width:75px;overflow:hidden;font-size:11px;color:#1e1e3c;letter-spacing:-0.2px">CPC</div>
<div class="t" style="left:339.5px;top:441px;width:66px;overflow:hidden;font-size:11px;color:#1e1e3c;letter-spacing:-0.2px">Main</div>
<div class="t" style="left:409.5px;top:441px;width:79px;overflow:hidden;font-size:11px;color:#1e1e3c;letter-spacing:-0.2px">HOP001</div>
<div class="t" style="left:492.5px;top:441px;width:122px;overflow:hidden;font-size:11px;color:#1e1e3c;letter-spacing:-0.2px">Hope Works</div>
<div class="t" style="left:618.5px;top:441px;width:96px;overflow:hidden;font-size:11px;color:#1e1e3c;letter-spacing:-0.2px">Cost Per Copy</div>
<div class="t" style="left:810.5px;top:441px;width:67px;overflow:hidden;font-size:11px;color:#1e1e3c;letter-spacing:-0.2px">01 Aug 2016</div>
<div class="t" style="left:881.5px;top:441px;width:67px;overflow:hidden;font-size:11px;color:#1e1e3c;letter-spacing:-0.2px">07 Sep 2021</div>
<div class="t" style="left:952.5px;top:441px;width:64px;overflow:hidden;font-size:11px;color:#1e1e3c;letter-spacing:-0.2px">Sales Department</div>
<div class="a" style="left:163px;top:459px;width:853px;height:20px;background:#ebebeb"></div>
<div class="a" style="left:163px;top:479px;width:853px;height:1px;background:#d6d6d9"></div>
<div class="a" style="left:163px;top:459px;width:15px;height:20px;background:#f3f3f4"></div>
<div class="t" style="left:182.5px;top:462px;width:74px;overflow:hidden;font-size:11px;color:#1e1e3c;letter-spacing:-0.2px">CO0000044</div>
<div class="t" style="left:260.5px;top:462px;width:75px;overflow:hidden;font-size:11px;color:#1e1e3c;letter-spacing:-0.2px">CPC</div>
<div class="t" style="left:339.5px;top:462px;width:66px;overflow:hidden;font-size:11px;color:#1e1e3c;letter-spacing:-0.2px">Durban Area</div>
<div class="t" style="left:409.5px;top:462px;width:79px;overflow:hidden;font-size:11px;color:#1e1e3c;letter-spacing:-0.2px">BOT0001</div>
<div class="t" style="left:492.5px;top:462px;width:122px;overflow:hidden;font-size:11px;color:#1e1e3c;letter-spacing:-0.2px">Bothas Networking inc</div>
<div class="t" style="left:618.5px;top:462px;width:96px;overflow:hidden;font-size:11px;color:#1e1e3c;letter-spacing:-0.2px">Cost Per Copy</div>
<div class="t" style="left:810.5px;top:462px;width:67px;overflow:hidden;font-size:11px;color:#1e1e3c;letter-spacing:-0.2px">25 Oct 2016</div>
<div class="t" style="left:881.5px;top:462px;width:67px;overflow:hidden;font-size:11px;color:#1e1e3c;letter-spacing:-0.2px">25 Oct 2021</div>
<div class="t" style="left:952.5px;top:462px;width:64px;overflow:hidden;font-size:11px;color:#1e1e3c;letter-spacing:-0.2px">Sales Department</div>
<div class="a" style="left:163px;top:480px;width:853px;height:20px;background:#ebebeb"></div>
<div class="a" style="left:163px;top:500px;width:853px;height:1px;background:#d6d6d9"></div>
<div class="a" style="left:163px;top:480px;width:15px;height:20px;background:#f3f3f4"></div>
<div class="t" style="left:182.5px;top:483px;width:74px;overflow:hidden;font-size:11px;color:#1e1e3c;letter-spacing:-0.2px">CO0000050</div>
<div class="t" style="left:260.5px;top:483px;width:75px;overflow:hidden;font-size:11px;color:#1e1e3c;letter-spacing:-0.2px">CPC</div>
<div class="t" style="left:339.5px;top:483px;width:66px;overflow:hidden;font-size:11px;color:#1e1e3c;letter-spacing:-0.2px">Durban Area</div>
<div class="t" style="left:409.5px;top:483px;width:79px;overflow:hidden;font-size:11px;color:#1e1e3c;letter-spacing:-0.2px">HOP001</div>
<div class="t" style="left:492.5px;top:483px;width:122px;overflow:hidden;font-size:11px;color:#1e1e3c;letter-spacing:-0.2px">Hope Works</div>
<div class="t" style="left:618.5px;top:483px;width:96px;overflow:hidden;font-size:11px;color:#1e1e3c;letter-spacing:-0.2px">Cost Per Copy</div>
<div class="t" style="left:810.5px;top:483px;width:67px;overflow:hidden;font-size:11px;color:#1e1e3c;letter-spacing:-0.2px">23 May 2017</div>
<div class="t" style="left:881.5px;top:483px;width:67px;overflow:hidden;font-size:11px;color:#1e1e3c;letter-spacing:-0.2px">23 May 2022</div>
<div class="t" style="left:952.5px;top:483px;width:64px;overflow:hidden;font-size:11px;color:#1e1e3c;letter-spacing:-0.2px">Sales Department</div>
<div class="a" style="left:163px;top:501px;width:853px;height:20px;background:#ebebeb"></div>
<div class="a" style="left:163px;top:521px;width:853px;height:1px;background:#d6d6d9"></div>
<div class="a" style="left:163px;top:501px;width:15px;height:20px;background:#f3f3f4"></div>
<div class="t" style="left:182.5px;top:504px;width:74px;overflow:hidden;font-size:11px;color:#1e1e3c;letter-spacing:-0.2px">CO0000061</div>
<div class="t" style="left:260.5px;top:504px;width:75px;overflow:hidden;font-size:11px;color:#1e1e3c;letter-spacing:-0.2px">CPC</div>
<div class="t" style="left:339.5px;top:504px;width:66px;overflow:hidden;font-size:11px;color:#1e1e3c;letter-spacing:-0.2px">BPO_RSI</div>
<div class="t" style="left:409.5px;top:504px;width:79px;overflow:hidden;font-size:11px;color:#1e1e3c;letter-spacing:-0.2px">TIA001</div>
<div class="t" style="left:492.5px;top:504px;width:122px;overflow:hidden;font-size:11px;color:#1e1e3c;letter-spacing:-0.2px">Titan Group</div>
<div class="t" style="left:618.5px;top:504px;width:96px;overflow:hidden;font-size:11px;color:#1e1e3c;letter-spacing:-0.2px">Cost Per Copy</div>
<div class="t" style="left:810.5px;top:504px;width:67px;overflow:hidden;font-size:11px;color:#1e1e3c;letter-spacing:-0.2px">23 Nov 2018</div>
<div class="t" style="left:881.5px;top:504px;width:67px;overflow:hidden;font-size:11px;color:#1e1e3c;letter-spacing:-0.2px">23 Nov 2023</div>
<div class="t" style="left:952.5px;top:504px;width:64px;overflow:hidden;font-size:11px;color:#1e1e3c;letter-spacing:-0.2px">Sales Department</div>
<div class="a" style="left:163px;top:522px;width:853px;height:20px;background:#ebebeb"></div>
<div class="a" style="left:163px;top:542px;width:853px;height:1px;background:#d6d6d9"></div>
<div class="a" style="left:163px;top:522px;width:15px;height:20px;background:#f3f3f4"></div>
<div class="t" style="left:182.5px;top:525px;width:74px;overflow:hidden;font-size:11px;color:#1e1e3c;letter-spacing:-0.2px">CO0000062</div>
<div class="t" style="left:260.5px;top:525px;width:75px;overflow:hidden;font-size:11px;color:#1e1e3c;letter-spacing:-0.2px">CPC</div>
<div class="t" style="left:339.5px;top:525px;width:66px;overflow:hidden;font-size:11px;color:#1e1e3c;letter-spacing:-0.2px">Durban Area</div>
<div class="t" style="left:409.5px;top:525px;width:79px;overflow:hidden;font-size:11px;color:#1e1e3c;letter-spacing:-0.2px">HOP001</div>
<div class="t" style="left:492.5px;top:525px;width:122px;overflow:hidden;font-size:11px;color:#1e1e3c;letter-spacing:-0.2px">Hope Works</div>
<div class="t" style="left:618.5px;top:525px;width:96px;overflow:hidden;font-size:11px;color:#1e1e3c;letter-spacing:-0.2px">Cost Per Copy</div>
<div class="t" style="left:718.5px;top:525px;width:88px;overflow:hidden;font-size:11px;color:#1e1e3c;letter-spacing:-0.2px">20</div>
<div class="t" style="left:810.5px;top:525px;width:67px;overflow:hidden;font-size:11px;color:#1e1e3c;letter-spacing:-0.2px">14 Dec 2018</div>
<div class="t" style="left:881.5px;top:525px;width:67px;overflow:hidden;font-size:11px;color:#1e1e3c;letter-spacing:-0.2px">14 Dec 2023</div>
<div class="t" style="left:952.5px;top:525px;width:64px;overflow:hidden;font-size:11px;color:#1e1e3c;letter-spacing:-0.2px">Sales Department</div>
<svg style="left:168px;top:234px" width="5" height="8"><path d="M0.5 0.5L4.5 4L0.5 7.5Z" fill="#1a1a2a"/></svg>
<div class="a" style="left:178px;top:183px;width:1px;height:41px;background:#d2d3d8"></div>
<div class="a" style="left:178px;top:228px;width:1px;height:315px;background:#d2d2d6"></div>
<div class="a" style="left:256px;top:183px;width:1px;height:41px;background:#d2d3d8"></div>
<div class="a" style="left:256px;top:228px;width:1px;height:315px;background:#d2d2d6"></div>
<div class="a" style="left:335px;top:183px;width:1px;height:41px;background:#d2d3d8"></div>
<div class="a" style="left:335px;top:228px;width:1px;height:315px;background:#d2d2d6"></div>
<div class="a" style="left:405px;top:183px;width:1px;height:41px;background:#d2d3d8"></div>
<div class="a" style="left:405px;top:228px;width:1px;height:315px;background:#d2d2d6"></div>
<div class="a" style="left:488px;top:183px;width:1px;height:41px;background:#d2d3d8"></div>
<div class="a" style="left:488px;top:228px;width:1px;height:315px;background:#d2d2d6"></div>
<div class="a" style="left:614px;top:183px;width:1px;height:41px;background:#d2d3d8"></div>
<div class="a" style="left:614px;top:228px;width:1px;height:315px;background:#d2d2d6"></div>
<div class="a" style="left:714px;top:183px;width:1px;height:41px;background:#d2d3d8"></div>
<div class="a" style="left:714px;top:228px;width:1px;height:315px;background:#d2d2d6"></div>
<div class="a" style="left:806px;top:183px;width:1px;height:41px;background:#d2d3d8"></div>
<div class="a" style="left:806px;top:228px;width:1px;height:315px;background:#d2d2d6"></div>
<div class="a" style="left:877px;top:183px;width:1px;height:41px;background:#d2d3d8"></div>
<div class="a" style="left:877px;top:228px;width:1px;height:315px;background:#d2d2d6"></div>
<div class="a" style="left:948px;top:183px;width:1px;height:41px;background:#d2d3d8"></div>
<div class="a" style="left:948px;top:228px;width:1px;height:315px;background:#d2d2d6"></div>
<div class="a" style="left:163px;top:769px;width:853px;height:19px;background:linear-gradient(#fff,#f3f3f5 3px,#f3f3f5 15px,#f8f8fa)"></div>
<div class="a" style="left:163px;top:788px;width:853px;height:1px;background:#a4a6ad"></div>
<svg style="left:169px;top:776px" width="5" height="8"><path d="M4.5 0.5L0.5 4L4.5 7.5Z" fill="#8a8c94"/></svg>
<div class="a" style="left:180px;top:775.5px;width:250px;height:8px;background:linear-gradient(#f0f0f2,#dcdde2);border:1px solid #a8aab0;border-radius:4px"></div>
<svg style="left:1004px;top:776px" width="5" height="8"><path d="M0.5 0.5L4.5 4L0.5 7.5Z" fill="#8a8c94"/></svg>
<div class="a" style="left:2px;top:789px;width:1014px;height:27px;background:linear-gradient(#dfe0e4,#c9cacf);border-bottom:1px solid #e6e6ea"></div>
<div class="t" style="left:9px;top:796.0px;font-size:11px;color:#2a2a48;font-weight:normal;letter-spacing:-0.25px">Open Windows</div>
<svg style="left:86px;top:801px" width="8" height="5"><path d="M0.5 0.5H7L3.75 4Z" fill="#2a2a48"/></svg>
<div class="a" style="left:877px;top:792px;width:1px;height:21px;background:#b8bac0"></div>
<div class="a" style="left:888px;top:792px;width:100px;height:22px;background:#fff;border:1px solid #d4d6dc"></div>
<div class="t" style="left:894px;top:796.0px;font-size:11px;color:#1e1e3c;font-weight:normal;">14 Dec 2018</div>
<svg style="left:975px;top:796px" width="8" height="14"><path d="M0.5 4L3.75 0.5L7 4Z M0.5 9.5L3.75 13L7 9.5Z" fill="#c0c2c8"/></svg>
<svg style="left:1000px;top:802px" width="12" height="12"><path d="M11 2L2 11M11 6L6 11M11 10L10 11" stroke="#70727a" stroke-width="1"/></svg>
<svg style="left:2px;top:4px" width="46" height="52" viewBox="2 4 46 52">
<defs><linearGradient id="gLg" x1="0" y1="0" x2="1" y2="1"><stop offset="0" stop-color="#808080"/><stop offset="0.45" stop-color="#5c5c5c"/><stop offset="1" stop-color="#474747"/></linearGradient></defs>
<path d="M22 8L41 19V40L22 51.5L2 40V19Z" fill="url(#gLg)"/>
<path d="M5 22.5V31.5H15.5V26.5H5" fill="none" stroke="#fff" stroke-width="2.2" stroke-linejoin="round"/>
<path d="M17.5 34.5V26.5H27.5V31.5H17.5" fill="none" stroke="#fff" stroke-width="2.2" stroke-linejoin="round"/>
<rect x="29.5" y="26.5" width="9.5" height="5" fill="none" stroke="#fff" stroke-width="2.2" rx="0.5"/>
<path d="M6.5 28h8M18.5 28h8M30.5 28h8" stroke="#2a2a2a" stroke-width="1.5"/>
<path d="M17.2 34.5L21.5 37V42L17.2 44.5L13 42V37Z" fill="#3a4a40" stroke="#e82030" stroke-width="1.6"/>
</svg>
</body></html>
